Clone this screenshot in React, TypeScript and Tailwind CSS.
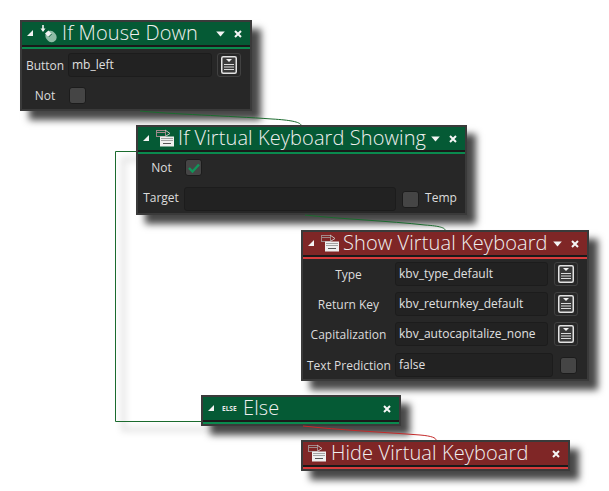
import type { ReactNode } from "react";

const font = { fontFamily: '"Open Sans", "Noto Sans", sans-serif' };

function Corner() {
  return (
    <svg width="8" height="8" viewBox="0 0 8 8" className="mb-0.5 shrink-0">
      <path d="M7 1V7H1Z" fill="#f2f2f2" />
    </svg>
  );
}

function Caret() {
  return (
    <svg width="9" height="6" viewBox="0 0 9 6" className="shrink-0">
      <path d="M0.2 0.5H8.8L4.5 5.5Z" fill="#f4f4f4" />
    </svg>
  );
}

function Close() {
  return (
    <svg width="8" height="8" viewBox="0 0 8 8" className="shrink-0">
      <path d="M1 1L7 7M7 1L1 7" stroke="#f6f6f6" strokeWidth="2" />
    </svg>
  );
}

function MouseIcon() {
  return (
    <svg width="18" height="18" viewBox="0 0 18 18" className="shrink-0">
      <path d="M3 0V5.5" stroke="#f4f4f4" strokeWidth="1.6" />
      <path d="M0.5 3.5H5.5L3 7Z" fill="#f4f4f4" />
      <rect x="6" y="5.5" width="10" height="12" rx="5" transform="rotate(-40 11 11.5)" fill="#8fbca6" />
      <path d="M5 8.5L8.5 5.5L11.5 9L8.5 12Z" fill="#f2f2f2" />
      <path d="M8.6 12L11.6 9" stroke="#055a35" />
    </svg>
  );
}

function KeyboardIcon() {
  return (
    <svg width="18" height="18" viewBox="0 0 18 18" className="mb-0.5 shrink-0">
      <rect x="0.5" y="1.5" width="9" height="6" fill="none" stroke="#a08a8a" />
      <path d="M1 3.5H9" stroke="#a08a8a" />
      <path d="M9 1L14 4.5L10 7" fill="none" stroke="#c8c0c0" />
      <rect x="4" y="7.5" width="14" height="10" fill="#efefef" />
      <path d="M5.5 9.5H16.5M5.5 11.5H16.5" stroke="#555555" strokeDasharray="1 1" />
      <path d="M7 14.5H15" stroke="#555555" />
    </svg>
  );
}

function ListButton() {
  return (
    <div className="flex h-6 w-6 shrink-0 items-center justify-center rounded-[3px] border border-[#414141]">
      <svg width="16" height="18" viewBox="0 0 16 18">
        <rect x="0.75" y="0.75" width="14.5" height="16.5" rx="1.5" fill="#3a3a3a" stroke="#e2e2e2" strokeWidth="1.5" />
        <path d="M5 3H11L8 6Z" fill="#f0f0f0" />
        <path d="M3 8.5H13M3 11H13M3 13.5H13" stroke="#dcdcdc" strokeWidth="1.2" />
      </svg>
    </div>
  );
}

function Field({ width, value }: { width: string; value?: string }) {
  return (
    <div className={`flex h-6 shrink-0 items-center rounded-[3px] border border-[#1c1c1c] bg-[#222222] pl-[3px] text-[12px] whitespace-nowrap text-[#e0e0e0] ${width}`}>
      {value}
    </div>
  );
}

function Check({ on }: { on?: boolean }) {
  return (
    <div className="flex h-[17px] w-[17px] shrink-0 items-center justify-center rounded-[3px] border border-[#1c1c1c] bg-[#454545]">
      {on && (
        <svg width="12" height="10" viewBox="0 0 12 10">
          <path d="M1 5L4.5 8.5L11 1.5" fill="none" stroke="#12955a" strokeWidth="2.4" />
        </svg>
      )}
    </div>
  );
}

function Label({ children, width }: { children: ReactNode; width: string }) {
  return <span className={`shrink-0 text-center text-[12px] leading-[17px] whitespace-nowrap text-[#dcdcdc] ${width}`}>{children}</span>;
}

function Block({
  pos,
  red,
  icon,
  title,
  caret,
  children,
}: {
  pos: string;
  red?: boolean;
  icon: ReactNode;
  title: string;
  caret?: boolean;
  children?: ReactNode;
}) {
  return (
    <div className={`absolute border-2 border-[#3a3a3a] bg-[#272727] shadow-[9px_9px_7px_rgba(0,0,0,0.72)] ${pos}`}>
      <div className={`flex h-[23px] items-center ${red ? "bg-[#7f2626]" : "bg-[#055a35]"}`}>
        {icon}
        <span className="pb-0.5 text-[20px] leading-[21px] font-light tracking-[0.1px] whitespace-nowrap text-[#f0f0f0]">{title}</span>
        <div className="ml-auto flex items-center gap-[9px] pr-2">
          {caret && <Caret />}
          <Close />
        </div>
      </div>
      <div className="h-0.5 bg-[#1a1a1a]" />
      <div className={`h-0.5 ${red ? "bg-[#d83c3c]" : "bg-[#0a8a4e]"}`} />
      {children}
    </div>
  );
}

export default function App() {
  return (
    <div className="relative h-[491px] w-[609px] overflow-hidden bg-white" style={font}>
      <svg width="609" height="491" className="absolute inset-0 blur-[3px]">
        <path d="M136 151.5H115.5V421.5H201" fill="none" stroke="#000" strokeOpacity="0.1" strokeWidth="5" transform="translate(8 8)" />
      </svg>

      <Block
        pos="left-5 top-5 h-[91px] w-[232px]"
        title="If Mouse Down"
        caret
        icon={
          <div className="flex items-center gap-1.5 pl-1 pr-1">
            <Corner />
            <MouseIcon />
          </div>
        }
      >
        <div className="flex flex-col gap-2.5 pt-1">
          <div className="flex items-center">
            <Label width="w-[46px]">Button</Label>
            <Field width="w-[144px]" value="mb_left" />
            <div className="ml-[5px]">
              <ListButton />
            </div>
          </div>
          <div className="flex items-center">
            <Label width="w-[46px]">Not</Label>
            <div className="ml-px">
              <Check />
            </div>
          </div>
        </div>
      </Block>

      <Block
        pos="left-[136px] top-[125px] h-[90px] w-[331px]"
        title="If Virtual Keyboard Showing"
        caret
        icon={
          <div className="flex items-center gap-1.5 pl-1 pr-1">
            <Corner />
            <KeyboardIcon />
          </div>
        }
      >
        <div className="flex flex-col gap-[11px] pt-[5px]">
          <div className="flex items-center">
            <Label width="w-[47px]">Not</Label>
            <Check on />
          </div>
          <div className="flex items-center">
            <Label width="mb-1 w-[46px]">Target</Label>
            <Field width="w-[212px]" />
            <div className="ml-[6px]">
              <Check />
            </div>
            <Label width="mb-1 ml-1 w-[36px]">Temp</Label>
          </div>
        </div>
      </Block>

      <Block
        pos="left-[301px] top-[230px] h-[151px] w-[288px]"
        red
        title="Show Virtual Keyboard"
        caret
        icon={
          <div className="flex items-center gap-1.5 pl-1 pr-1">
            <Corner />
            <KeyboardIcon />
          </div>
        }
      >
        <div className="flex flex-col gap-1.5 pl-1 pt-[3px]">
          {[
            ["Type", "kbv_type_default"],
            ["Return Key", "kbv_returnkey_default"],
            ["Capitalization", "kbv_autocapitalize_none"],
          ].map(([label, value]) => (
            <div key={label} className="flex items-center">
              <Label width="mr-[5px] w-[83px]">{label}</Label>
              <Field width="w-[153px]" value={value} />
              <div className="ml-1.5">
                <ListButton />
              </div>
            </div>
          ))}
          <div className="mt-px flex items-center">
            <Label width="mr-[5px] w-[83px]">Text Prediction</Label>
            <Field width="w-[158px]" value="false" />
            <div className="ml-[7px]">
              <Check />
            </div>
          </div>
        </div>
      </Block>

      <Block
        pos="left-[201px] top-[395px] h-[31px] w-[200px]"
        title="Else"
        icon={
          <div className="flex items-center gap-[7px] pl-1 pr-1.5">
            <Corner />
            <span className="w-[15px] text-[6.5px] font-bold whitespace-nowrap text-[#e8e8e8]">ELSE</span>
          </div>
        }
      />

      <Block
        pos="left-[301px] top-[440px] h-[31px] w-[269px]"
        red
        title="Hide Virtual Keyboard"
        icon={
          <div className="flex px-[5px]">
            <KeyboardIcon />
          </div>
        }
      />

      <svg width="609" height="491" className="pointer-events-none absolute inset-0">
        <g fill="none" stroke="#1b6b2e">
          <path d="M136 151.5H115.5V421.5H201" />
          <path d="M140 111C170 114 230 116 272 119C290 120 300 122 301 125" />
          <path d="M305 215C340 219 390 221 425 225C440 226 445 228 445 230" />
        </g>
        <path d="M303 426C340 430 380 432 420 435C432 436 436 438 436 440" fill="none" stroke="#c42a2a" />
      </svg>
    </div>
  );
}
